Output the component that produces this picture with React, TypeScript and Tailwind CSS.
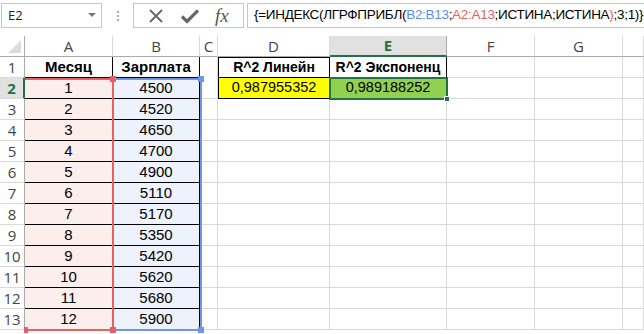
import React from 'react';

const COLS = [
  { key: 'A', w: 'w-[88px]' },
  { key: 'B', w: 'w-[87px]' },
  { key: 'C', w: 'w-[18px]' },
  { key: 'D', w: 'w-[112px]' },
  { key: 'E', w: 'w-[117px]' },
  { key: 'F', w: 'w-[88px]' },
  { key: 'G', w: 'w-[88px]' },
  { key: 'H', w: 'w-[21px]' },
];

const DATA = [
  [1, 4500], [2, 4520], [3, 4650], [4, 4700], [5, 4900], [6, 5110],
  [7, 5170], [8, 5350], [9, 5420], [10, 5620], [11, 5680], [12, 5900],
];

const cellFont = "font-['Liberation_Sans',Arial,sans-serif] text-black";

function Cell({ col, row }: { col: string; row: number }) {
  let cls = 'h-[21px] border-r border-b border-[#d9d9d9] flex items-center justify-center ' + cellFont;
  let text: React.ReactNode = '';

  if (row === 1) {
    if (col === 'A') { text = 'Месяц'; cls += ' text-[15px] font-bold border-r-black border-b-black'; }
    if (col === 'B') { text = 'Зарплата'; cls += ' text-[15px] font-bold border-r-black border-b-black'; }
    if (col === 'C') cls += ' border-b-transparent';
    if (col === 'D') { text = 'R^2 Линейн'; cls += ' text-[14px] font-bold border-t border-l border-black border-r-black border-b-black'; }
    if (col === 'E') { text = 'R^2 Экспоненц'; cls += ' text-[14px] font-bold border-black'; }
  } else if (row >= 2 && row <= 13) {
    const d = DATA[row - 2];
    if (col === 'A') { text = d[0]; cls += ' text-[15px] bg-[#fdeeee] border-b-black border-r-black'; }
    if (col === 'B') { text = d[1]; cls += ' text-[15px] bg-[#edf2fd] border-b-black border-r-black'; }
    if (row === 2 && col === 'D') { text = '0,987955352'; cls += ' text-[14.5px] bg-[#ffff00] border-l border-black'; }
    if (row === 2 && col === 'E') { text = '0,989188252'; cls += ' text-[14.5px] bg-[#92d050] border-black'; }
  }

  return <div className={cls}>{text}</div>;
}

export default function App() {
  const rows = Array.from({ length: 13 }, (_, i) => i + 1);

  return (
    <div className="w-[644px] h-[334px] overflow-hidden bg-white select-none">
      {/* Formula bar */}
      <div className="h-[36px] flex items-start pt-[3px] pl-[1px] font-['Open_Sans',Arial,sans-serif]">
        <div className="shrink-0 w-[101px] h-[25px] border border-[#c6c6c6] flex items-center justify-between pl-[6px] pr-[5px]">
          <span className="text-[13px] text-[#222]">E2</span>
          <svg width="8" height="5" viewBox="0 0 8 5"><path d="M0 0h8L4 4z" fill="#777" /></svg>
        </div>
        <div className="shrink-0 w-[31px] h-[25px] flex flex-col items-center justify-center gap-[2px]">
          <span className="w-[2px] h-[2px] bg-[#aaa]" />
          <span className="w-[2px] h-[2px] bg-[#aaa]" />
          <span className="w-[2px] h-[2px] bg-[#aaa]" />
        </div>
        <div className="shrink-0 w-[111px] h-[25px] border border-[#c6c6c6] flex items-center justify-around px-[6px]">
          <svg width="16" height="16" viewBox="0 0 16 16">
            <path d="M2 2L14 14M14 2L2 14" stroke="#666" strokeWidth="1.8" />
          </svg>
          <svg width="18" height="16" viewBox="0 0 18 16">
            <path d="M1 8.5L6 13.5L17 2.5" stroke="#666" strokeWidth="3.2" fill="none" />
          </svg>
          <span className="font-['Liberation_Serif',serif] italic text-[19px] text-[#555] leading-none">fx</span>
        </div>
        <div className="ml-[3px] flex-1 min-w-0 overflow-hidden h-[25px] border border-[#c6c6c6] border-r-0 flex items-center pl-[6px] font-['Liberation_Sans',Arial,sans-serif] text-[13.5px] tracking-[-0.3px] text-black whitespace-nowrap">
          <span>{'{=ИНДЕКС(ЛГРФПРИБЛ('}</span>
          <span className="text-[#5b8ee6]">B2:B13</span>
          <span>;</span>
          <span className="text-[#e46262]">A2:A13</span>
          <span>;ИСТИНА;ИСТИНА</span>
          <span className="text-[#e46262]">)</span>
          <span>{';3;1)}'}</span>
        </div>
      </div>

      {/* Sheet */}
      <div className="relative">
        {/* Column headers */}
        <div className="flex">
          <div className="w-[25px] h-[21px] border-r border-b border-[#ababab] relative">
            <svg className="absolute right-[3px] bottom-[3px]" width="13" height="13" viewBox="0 0 13 13">
              <path d="M13 0V13H0z" fill="#dcdcdc" />
            </svg>
          </div>
          {COLS.map(c => (
            <div
              key={c.key}
              className={
                c.w +
                " h-[21px] flex items-center justify-center font-['Open_Sans',Arial,sans-serif] text-[15px] border-r " +
                (c.key === 'E'
                  ? 'bg-[#e1e1e1] text-[#217346] font-bold border-b-2 border-b-[#217346] border-r-[#ababab]'
                  : 'text-[#444] border-b border-[#ababab] border-r-[#d9d9d9]')
              }
            >
              {c.key === 'H' ? '' : c.key}
            </div>
          ))}
        </div>

        {rows.map(r => (
          <div key={r} className="flex">
            <div
              className={
                'w-[25px] h-[21px] flex items-center justify-center font-[\'Open_Sans\',Arial,sans-serif] text-[15px] border-b ' +
                (r === 2
                  ? 'bg-[#e1e1e1] text-[#217346] font-bold border-r-2 border-r-[#217346] border-b-[#d9d9d9]'
                  : 'text-[#444] border-r border-r-[#ababab] border-b-[#d9d9d9]')
              }
            >
              {r}
            </div>
            {COLS.map(c => (
              <div key={c.key} className={c.w}>
                <Cell col={c.key} row={r} />
              </div>
            ))}
          </div>
        ))}

        {/* Range highlight A2:A13 */}
        <div className="absolute left-[25px] top-[42px] w-[89px] h-[253px] border-t-2 border-r-2 border-b-2 border-[#e46262] pointer-events-none">
          <span className="absolute -right-[4px] -top-[4px] w-[6px] h-[6px] bg-[#e46262]" />
          <span className="absolute -right-[4px] -bottom-[4px] w-[6px] h-[6px] bg-[#e46262]" />
          <span className="absolute -left-[1px] -bottom-[4px] w-[4px] h-[6px] bg-[#e46262]" />
        </div>
        {/* Range highlight B2:B13 */}
        <div className="absolute left-[115px] top-[42px] w-[87px] h-[253px] border-t-2 border-r-2 border-b-2 border-[#6d96e8] pointer-events-none">
          <span className="absolute -right-[4px] -top-[4px] w-[6px] h-[6px] bg-[#6d96e8]" />
          <span className="absolute -right-[4px] -bottom-[4px] w-[6px] h-[6px] bg-[#6d96e8]" />
        </div>
        {/* Selection E2 */}
        <div className="absolute left-[329px] top-[41px] w-[119px] h-[23px] border-2 border-[#217346] pointer-events-none">
          <span className="absolute -right-[4px] -bottom-[4px] w-[6px] h-[6px] bg-[#217346] border border-white" />
        </div>
      </div>
    </div>
  );
}
